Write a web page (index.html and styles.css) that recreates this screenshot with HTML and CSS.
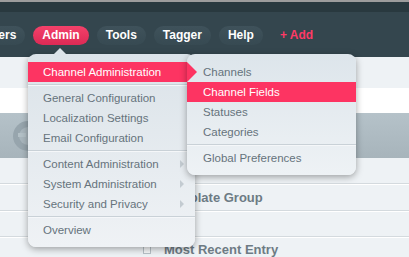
FILE: index.html
```html
<!DOCTYPE html>
<html lang="en">
<head>
  <meta charset="UTF-8">
  <meta name="viewport" content="width=device-width, initial-scale=1.0">
  <title>Admin Menu</title>
  <link rel="stylesheet" href="styles.css">
</head>
<body>
  <div class="topline"></div>
  <div class="topbar"></div>

  <nav class="nav">
    <a class="pill">Users</a>
    <a class="pill active">Admin</a>
    <a class="pill">Tools</a>
    <a class="pill">Tagger</a>
    <a class="pill">Help</a>
    <a class="pill add">+ Add</a>
  </nav>

  <div class="page">
    <div class="band band-light"></div>
    <div class="band band-white"></div>
    <div class="band band-grey">
      <svg class="logo" width="40" height="40" viewBox="0 0 40 40">
        <circle cx="20" cy="20" r="15" fill="#97a5ad"/>
        <circle cx="20" cy="20" r="9" fill="#a9b6bd"/>
        <rect x="10" y="17" width="8" height="4" fill="#b3c0c6"/>
      </svg>
    </div>
    <div class="row"></div>
    <div class="row"><span class="row-title">Template Group</span></div>
    <div class="row"></div>
    <div class="row"><span class="check"></span><span class="row-title">Most Recent Entry</span></div>
  </div>

  <!-- dropdown menu Admin -->
  <ul class="menu">
    <li class="item selected">Channel Administration</li>
    <li class="sep"></li>
    <li class="item">General Configuration</li>
    <li class="item">Localization Settings</li>
    <li class="item">Email Configuration</li>
    <li class="sep"></li>
    <li class="item has-sub">Content Administration</li>
    <li class="item has-sub">System Administration</li>
    <li class="item has-sub">Security and Privacy</li>
    <li class="sep"></li>
    <li class="item">Overview</li>
  </ul>

  <ul class="submenu">
    <li class="item">Channels</li>
    <li class="item selected">Channel Fields</li>
    <li class="item">Statuses</li>
    <li class="item">Categories</li>
    <li class="sep"></li>
    <li class="item">Global Preferences</li>
  </ul>
</body>
</html>
```

FILE: styles.css
```css
body {
  margin: 0;
  font-family: "Liberation Sans", Arial, sans-serif;
  background-color: #eef2f5;
  overflow: hidden;
  position: relative;
}

.topline {
  height: 2px;
  background-color: #9c9c9c;
}

.topbar {
  height: 10px;
  background-color: #29393f;
}

.nav {
  height: 45px;
  background-color: #34464e;
  display: flex;
  align-items: center;
  gap: 8px;
  margin-left: -26px;
  padding-top: 1px;
  box-sizing: border-box;
}

.pill {
  height: 19px;
  line-height: 19px;
  padding: 0 9px;
  border-radius: 10px;
  background: linear-gradient(#3f525b, #374a52);
  color: #fff;
  font-size: 12px;
  font-weight: bold;
  white-space: nowrap;
}

.pill.active {
  background: linear-gradient(#f4416a, #dc2a55);
}

.pill.add {
  background: none;
  color: #ff3a66;
}

.band-light {
  height: 31px;
}

.band-white {
  height: 25px;
  background-color: #fff;
}

.band-grey {
  height: 45px;
  background: linear-gradient(#b5c2c9, #a7b4bb);
  position: relative;
}

.logo {
  position: absolute;
  left: 8px;
  top: 3px;
}

.row {
  height: 26px;
  border-bottom: 1px solid #d4dade;
  box-shadow: 0 1px 0 #fff;
  display: flex;
  align-items: center;
  padding-left: 143px;
  box-sizing: border-box;
}

.row:nth-child(5) {
  height: 27px;
}

.row-title {
  margin-left: 21px;
  font-size: 13px;
  font-weight: bold;
  color: #6d7b84;
}

.check {
  width: 6px;
  height: 6px;
  border: 1px solid #b8c1c7;
  background-color: #f6f8f9;
}

.check + .row-title {
  margin-left: 13px;
}

/* dropdown */
.menu,
.submenu {
  list-style: none;
  margin: 0;
  padding: 8px 0 7px;
  position: absolute;
  top: 54px;
  border-radius: 8px;
  background: linear-gradient(#dbe3e9, #eff2f5);
  box-shadow: 0 2px 7px rgba(0, 0, 0, 0.35);
  font-size: 11.5px;
  color: #66737c;
}

.menu {
  left: 28px;
  width: 167px;
  z-index: 1;
}

.menu::before {
  content: '';
  position: absolute;
  left: 26px;
  top: -6px;
  border-left: 6px solid transparent;
  border-right: 6px solid transparent;
  border-bottom: 6px solid #dbe3e9;
}

.submenu {
  left: 187px;
  width: 169px;
  z-index: 2;
  background: linear-gradient(#dde5eb, #eef2f5);
}

.submenu::before {
  content: '';
  position: absolute;
  left: 0;
  top: 8px;
  border-top: 10px solid transparent;
  border-bottom: 10px solid transparent;
  border-left: 10px solid #fd3462;
}

.item {
  height: 20px;
  line-height: 20px;
  padding-left: 15px;
  white-space: nowrap;
  position: relative;
}

.submenu .item {
  padding-left: 16px;
}

.item.selected {
  background-color: #fd3462;
  color: #fff;
}

.has-sub::after {
  content: '';
  position: absolute;
  left: 152px;
  top: 6px;
  border-top: 4px solid transparent;
  border-bottom: 4px solid transparent;
  border-left: 4px solid #c3cbd1;
}

.sep {
  height: 1px;
  margin: 2px 0 2px;
  background-color: #c9d1d7;
  border-bottom: 1px solid #f5f7f9;
}
```
